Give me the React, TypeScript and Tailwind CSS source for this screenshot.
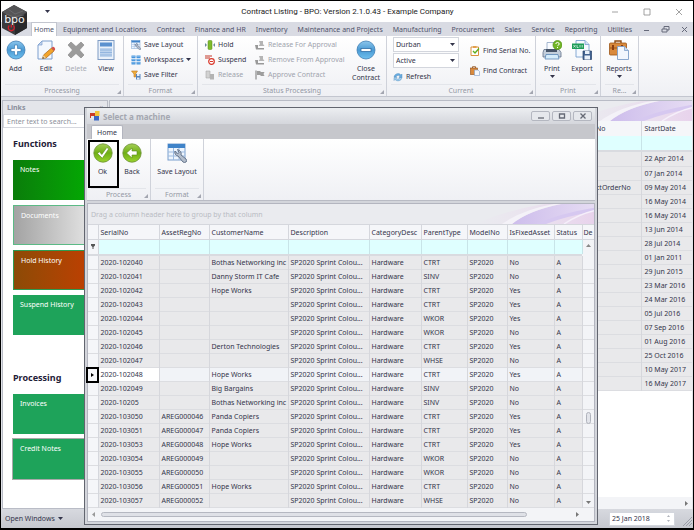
import React, { useState } from 'react';

type MachineRow = [string, string, string, string, string];

const MACHINES: MachineRow[] = [
  ['2020-102040', '', 'Bothas Networking inc', 'CTRT', 'No'],
  ['2020-102041', '', 'Danny Storm IT Cafe', 'SINV', 'No'],
  ['2020-102042', '', 'Hope Works', 'CTRT', 'Yes'],
  ['2020-102043', '', '', 'CTRT', 'Yes'],
  ['2020-102044', '', '', 'WKOR', 'Yes'],
  ['2020-102045', '', '', 'WKOR', 'No'],
  ['2020-102046', '', 'Derton Technologies', 'CTRT', 'Yes'],
  ['2020-102047', '', '', 'WHSE', 'No'],
  ['2020-102048', '', 'Hope Works', 'CTRT', 'Yes'],
  ['2020-102049', '', 'Big Bargains', 'SINV', 'No'],
  ['2020-10205', '', 'Bothas Networking inc', 'SINV', 'No'],
  ['2020-103050', 'AREG000046', 'Panda Copiers', 'CTRT', 'Yes'],
  ['2020-103051', 'AREG000047', 'Panda Copiers', 'CTRT', 'Yes'],
  ['2020-103053', 'AREG000048', 'Hope Works', 'CTRT', 'Yes'],
  ['2020-103054', 'AREG000049', '', 'WKOR', 'No'],
  ['2020-103055', 'AREG000050', '', 'WKOR', 'No'],
  ['2020-103056', 'AREG000051', 'Hope Works', 'CTRT', 'No'],
  ['2020-103057', 'AREG000052', '', 'WHSE', 'No'],
];

const START_DATES = [
  '22 Apr 2014', '07 Jan 2014', '09 May 2014', '16 May 2014', '16 May 2014', '13 Jun 2014',
  '28 Jul 2014', '01 Jan 2011', '29 Jun 2015', '23 Mar 2016', '24 Mar 2016', '05 Jul 2016',
  '07 Sep 2016', '01 Aug 2016', '25 Oct 2016', '10 May 2017', '16 May 2017',
];

const MENU = [
  'Equipment and Locations', 'Contract', 'Finance and HR', 'Inventory', 'Maintenance and Projects',
  'Manufacturing', 'Procurement', 'Sales', 'Service', 'Reporting', 'Utilities',
];

const COLUMNS = [
  'SerialNo', 'AssetRegNo', 'CustomerName', 'Description', 'CategoryDesc',
  'ParentType', 'ModelNo', 'IsFixedAsset', 'Status',
];

function Logo() {
  return (
    <svg viewBox="0 0 28 32" className="w-7 h-8">
      <path d="M13 0 26 7v16l-12 7L1 23V7z" fill="#3b3b3d" />
      <path d="M13 0 26 7l-12 7L1 7z" fill="#555557" />
      <path d="M14 15 26 8v15l-12 7z" fill="#29292b" />
      <path d="M7 4l7 5 8-3M5 9l8 3 10-2" stroke="#77777a" strokeWidth=".6" fill="none" />
      <text x="13.500" y="18" textAnchor="middle" fontSize="11" fontFamily="DejaVu Sans" fill="#f4f4f4">bpo</text>
      <path d="M8.300 20.500a3 3 0 1 0 4 0M10.300 19.500v3" fill="none" stroke="#d3202c" strokeWidth="1.300" />
    </svg>
  );
}

function AddIcon() {
  return (
    <svg viewBox="0 0 20 20" className="size-5">
      <defs>
        <linearGradient id="blueBall" x1="0" y1="0" x2="0" y2="1">
          <stop offset="0" stopColor="#8cc6ec" />
          <stop offset=".5" stopColor="#4a9ad4" />
          <stop offset="1" stopColor="#6fc0ee" />
        </linearGradient>
      </defs>
      <circle cx="10" cy="10" r="9" fill="url(#blueBall)" stroke="#3f7fb5" strokeWidth=".8" />
      <path d="M8.500 5h3v3.500H15v3h-3.500V15h-3v-3.500H5v-3h3.500z" fill="#fff" stroke="#3b7db3" strokeWidth=".7" />
    </svg>
  );
}

function CloseContractIcon() {
  return (
    <svg viewBox="0 0 20 20" className="size-5">
      <circle cx="10" cy="10" r="9" fill="url(#blueBall)" stroke="#3f7fb5" strokeWidth=".8" />
      <rect x="5" y="8.500" width="10" height="3" fill="#fff" stroke="#2f6da5" strokeWidth=".8" />
    </svg>
  );
}

function EditIcon() {
  return (
    <svg viewBox="0 0 20 20" className="size-5">
      <path d="M6 1h10v18H2V5z" fill="#f4f8fe" stroke="#7d9fce" />
      <path d="M6 1v4H2z" fill="#c3d5ee" stroke="#7d9fce" strokeWidth=".7" />
      <path d="M6.500 18.500l1-3.500 8-7 2.500 3-8 7z" fill="#f2a42c" stroke="#a4641a" strokeWidth=".7" />
      <path d="M15.500 8l1-1q1-.5 2 .5t.5 2.500l-1 1z" fill="#d5524a" />
      <path d="M6.500 18.500l1-3.500 2.500 3z" fill="#e9cfa0" />
      <path d="M6.500 18.500l.5-1.500 1.200 1.200z" fill="#333" />
    </svg>
  );
}

function DeleteIcon() {
  return (
    <svg viewBox="0 0 20 20" className="size-5">
      <path d="M5 2l5 4.500L15 2l3 3-4.500 5 4.500 5-3 3-5-4.500L5 18l-3-3 4.500-5L2 5z" fill="#9b9b9b" stroke="#858585" strokeWidth=".6" />
    </svg>
  );
}

function ViewIcon() {
  return (
    <svg viewBox="0 0 20 20" className="size-5">
      <rect x="2" y=".5" width="16" height="19" fill="#eaf1fa" stroke="#7f9cc4" />
      <rect x="4" y="2.500" width="12" height="4" fill="#5b91cf" />
      <rect x="4" y="8" width="12" height="9" fill="#bdd3ed" />
      <path d="M4 10h12M4 12.500h12M4 15h12" stroke="#89aeda" strokeWidth=".8" />
    </svg>
  );
}

function PrintIcon() {
  return (
    <svg viewBox="0 0 20 20" className="size-5">
      <path d="M5 2.500h9V10H5z" fill="#fafcff" stroke="#8fa6c4" strokeWidth=".8" />
      <path d="M2 9.500h15l2 3V17H1v-4.500z" fill="#c3cedb" stroke="#5f7088" strokeWidth=".8" />
      <path d="M4 9h11v3H4z" fill="#475569" />
      <path d="M4 14.500h12l1 4.500H3z" fill="#d5ecfb" stroke="#5b87b5" strokeWidth=".8" />
      <circle cx="15.500" cy="5" r="4.500" fill="#72b626" stroke="#4f8f14" strokeWidth=".7" />
      <path d="M13.800 4q0-1.500 1.700-1.500T17.200 4q0 1-1.700 1.700M15.500 7v1" fill="none" stroke="#fff" strokeWidth="1" />
    </svg>
  );
}

function ExportIcon() {
  return (
    <svg viewBox="0 0 20 20" className="size-5">
      <path d="M4 .5h9l4 4V17H4z" fill="#f5f9ff" stroke="#7ba0cf" strokeWidth=".9" />
      <path d="M13 .5v4h4" fill="#cfe0f3" stroke="#7ba0cf" strokeWidth=".8" />
      <rect x="0" y="3.500" width="12" height="5.500" fill="#1f9d5a" />
      <path d="M1.500 5l2 2.500m0-2.500l-2 2.500M5 5v2.500h1.500M8 5v2.500M10.200 5v2.500" stroke="#d8f2e4" strokeWidth=".8" fill="none" />
      <path d="M11 11h8.500v8.500H11z" fill="#41618f" stroke="#27426b" strokeWidth=".7" />
      <path d="M13 11h4.500v3H13zM12.500 15.500H18v4h-5.500z" fill="#e8f0fa" />
    </svg>
  );
}

function ReportsIcon() {
  return (
    <svg viewBox="0 0 20 20" className="size-5">
      <path d="M6 3V1h6v2" fill="none" stroke="#8c4a14" strokeWidth="1.400" />
      <rect x=".5" y="3" width="17" height="12" rx="1" fill="#d98a3d" stroke="#9c5618" strokeWidth=".8" />
      <path d="M1 8h16" stroke="#9c5618" />
      <path d="M3 5h2v5H3zM12 5h2v3h-2z" fill="#8b3f12" />
      <path d="M8.500 6.500h7l4 4v9h-11z" fill="#f2f7fe" stroke="#7f9fca" strokeWidth=".9" />
      <path d="M15.500 6.500v4h4" fill="#cadbf0" stroke="#7f9fca" strokeWidth=".8" />
    </svg>
  );
}

function OkIcon({ back = false }: { back?: boolean }) {
  return (
    <svg viewBox="0 0 20 20" className="size-5">
      <defs>
        <linearGradient id={back ? 'greenBack' : 'greenOk'} x1="0" y1="0" x2="0" y2="1">
          <stop offset="0" stopColor="#a5cf55" />
          <stop offset=".5" stopColor="#6fae16" />
          <stop offset="1" stopColor="#9bd42e" />
        </linearGradient>
      </defs>
      <circle cx="10" cy="10" r="9.200" fill={back ? 'url(#greenBack)' : 'url(#greenOk)'} stroke="#6b8f35" strokeWidth=".8" />
      {back ? (
        <path d="M4.500 10l5.500-5v3h5v4h-5v3z" fill="#fff" stroke="#5b8a1d" strokeWidth=".6" />
      ) : (
        <path d="M4.500 10.500l2-1.700 2.300 2.700 5-7 2 1.300-6.500 9.500z" fill="#fff" stroke="#5b8a1d" strokeWidth=".6" />
      )}
    </svg>
  );
}

function LayoutIcon({ className }: { className: string }) {
  return (
    <svg viewBox="0 0 20 20" className={className}>
      <rect x="1" y="1" width="17" height="16" fill="#eef5fd" stroke="#7a9fce" />
      <rect x="1" y="1" width="17" height="4" fill="#3f83c9" />
      <path d="M1 9h17M1 13h17M6.500 5v12M12 5v12" stroke="#9dbbe0" />
      <path d="M8 8q-1 4 3 5l5 6q1.500 1 3 0t0-3L14 12q1-4-3.500-5.500l1.500 3L10.500 11z" fill="#b3bdcb" stroke="#66758c" strokeWidth="1" />
    </svg>
  );
}

// 10px glyphs for the small ribbon buttons
function SmallIcon({ kind }: { kind: string }) {
  if (kind === 'layout') return <LayoutIcon className="size-2.5 shrink-0" />;
  return (
    <svg viewBox="0 0 10 10" className="size-2.5 shrink-0">
      {kind === 'workspaces' && (
        <>
          <path d="M.5 .5h4v2.500h-4zM5.500 .5h4v2.500h-4zM.5 3.800h4v2.500h-4zM5.500 3.800h4v2.500h-4zM.5 7h4v2.500h-4zM5.500 7h4v2.500h-4z" fill="#4795dc" />
          <path d="M1 1.300h3M6 1.300h3M1 4.600h3M6 4.600h3M1 7.800h3M6 7.800h3" stroke="#a6d0f5" strokeWidth=".6" />
        </>
      )}
      {kind === 'filter' && (
        <>
          <path d="M.5 1h6l-2 3v3H3V4z" fill="#f0ae3a" stroke="#bd7620" strokeWidth=".6" />
          <path d="M5 4h4.500v5.500H5z" fill="#5684bd" />
          <path d="M6 4h2.500v2H6zM6 7.500h2.500v2H6z" fill="#e4edf8" />
        </>
      )}
      {kind === 'hold' && (
        <>
          <rect x="3" y=".5" width="4" height="9" rx="1" fill="#7dbb2b" stroke="#558a18" strokeWidth=".5" />
          <path d="M0 3l2 2-2 2zM10 3L8 5l2 2z" fill="#6d8a9c" />
        </>
      )}
      {kind === 'suspend' && (
        <>
          <path d="M0 1h7M0 3h5" stroke="#c3392b" strokeWidth="1.200" />
          <circle cx="6.500" cy="6.500" r="2.800" fill="#fff" stroke="#d8372a" strokeWidth="1.200" />
          <path d="M5 6.500h3" stroke="#d8372a" />
        </>
      )}
      {kind === 'release' && (
        <>
          <path d="M1 1h4v7H1z" fill="#d2d2d2" stroke="#aaa" strokeWidth=".6" />
          <path d="M5 4h4v5.500H5z" fill="#b3b3b3" />
        </>
      )}
      {kind === 'stamp' && (
        <>
          <path d="M4 1h4v3l1.500 2h-6L5 4z" fill="#b5b5b5" />
          <path d="M0 5h3v3h6v1.500H1z" fill="#999" />
        </>
      )}
      {kind === 'flag' && (
        <>
          <path d="M1 .5v9" stroke="#777" />
          <path d="M2 1h3l1 1h3.500L8.500 4l1 2H6L5 5H2z" fill="#9d9d9d" />
        </>
      )}
      {kind === 'refresh' && (
        <>
          <path d="M1 5a4 4 0 0 1 7-2l1-1v3.500H6L7 4a2.500 2.500 0 0 0-4 1z" fill="#6aaee2" stroke="#3c80b8" strokeWidth=".4" />
          <path d="M9 5.500a4 4 0 0 1-7 2l-1 1V5.500h3l-1 1a2.500 2.500 0 0 0 4-1z" fill="#a3d0f0" stroke="#3c80b8" strokeWidth=".4" />
        </>
      )}
      {kind === 'serial' && (
        <>
          <path d="M1 1h7.500v8.500H1z" fill="#fff" stroke="#d9903c" />
          <path d="M3 0h3.500v2H3z" fill="#e2a04c" />
          <path d="M3 5l2 2 4-4.500" stroke="#5fae20" strokeWidth="1.400" fill="none" />
        </>
      )}
      {kind === 'contract' && (
        <>
          <rect x=".5" y="2" width="7" height="6.500" fill="#d98a3d" stroke="#8f4c15" strokeWidth=".6" />
          <path d="M2.500 2V.7h3V2" stroke="#8f4c15" strokeWidth=".8" fill="none" />
          <path d="M4.500 4H8l1.500 1.500v4h-5z" fill="#f4f8fe" stroke="#7f9fca" strokeWidth=".6" />
        </>
      )}
    </svg>
  );
}

function Caret({ className = '' }: { className?: string }) {
  return (
    <svg viewBox="0 0 5 3" className={`w-[5px] h-[3px] shrink-0 ${className}`}>
      <path d="M0 0h5L2.500 3z" fill="currentColor" />
    </svg>
  );
}

function Group({ title, width, children }: { title: string; width: string; children: React.ReactNode }) {
  return (
    <section className={`${width} shrink-0 flex flex-col border-r border-[#cfd2da] pt-px`}>
      <div className="flex-1 flex">{children}</div>
      <div className="relative h-3 mx-1 border-t border-[#e3e5ea] text-center leading-[11px] text-[#9498a4]">
        {title}
        <svg viewBox="0 0 4 4" className="absolute -right-0.5 bottom-0.5 size-1">
          <path d="M4 0v4H0z" fill="#a3a6b0" />
        </svg>
      </div>
    </section>
  );
}

function BigButton({ icon, label, width, disabled, menu }: {
  icon: React.ReactNode; label: string; width: string; disabled?: boolean; menu?: boolean;
}) {
  return (
    <button disabled={disabled} className={`${width} flex flex-col items-center pt-[3px] leading-[9px] ${disabled ? 'text-[#a8abb4]' : ''}`}>
      {icon}
      <span className="pt-1">{label}</span>
      {menu && <Caret className="mt-0.5" />}
    </button>
  );
}

function SmallButton({ icon, label, disabled, menu }: { icon: string; label: string; disabled?: boolean; menu?: boolean }) {
  return (
    <button disabled={disabled} className={`flex items-center gap-[3px] h-[15px] whitespace-nowrap ${disabled ? 'text-[#a0a3ad]' : ''}`}>
      <SmallIcon kind={icon} />
      {label}
      {menu && <Caret />}
    </button>
  );
}

function Combo({ label, value }: { label: string; value: string }) {
  return (
    <div className="relative">
      <select aria-label={label} className="block w-[66px] h-[15px] appearance-none border border-[#d3d6dd] bg-white pl-[2px]">
        <option>{value}</option>
      </select>
      <Caret className="absolute right-1 top-1.5 pointer-events-none" />
    </div>
  );
}

function Swirl() {
  return (
    <svg viewBox="0 0 130 21" preserveAspectRatio="none" className="w-[130px] h-full">
      <defs>
        <linearGradient id="swirlPink" x1="0" x2="1">
          <stop offset="0" stopColor="#ecdff0" stopOpacity="0" />
          <stop offset="1" stopColor="#e8d3ec" />
        </linearGradient>
        <linearGradient id="swirlViolet" x1="0" x2="1">
          <stop offset="0" stopColor="#cdbdec" />
          <stop offset="1" stopColor="#e6dcf3" />
        </linearGradient>
      </defs>
      <path d="M10 21Q45 6 80 0h50v21z" fill="url(#swirlPink)" />
      <path d="M48 21Q66 6 98 0h32v8q-30 4-50 13z" fill="url(#swirlViolet)" />
      <path d="M38 21Q58 6 90 0h7Q64 7 48 21z" fill="#f4f2f8" />
      <path d="M72 21Q96 10 130 4v4q-28 5-48 13z" fill="#d6c8f0" />
      <path d="M100 21q14-10 30-14" stroke="#f5effa" strokeWidth="1.500" fill="none" />
    </svg>
  );
}

function MainRibbon() {
  return (
    <div className="flex h-[61px] border-b border-[#c3c6cf] bg-gradient-to-b from-white to-[#eff0f4]">
      <Group title="Processing" width="w-[123px]">
        <BigButton icon={<AddIcon />} label="Add" width="w-[29px]" />
        <BigButton icon={<EditIcon />} label="Edit" width="w-8" />
        <BigButton icon={<DeleteIcon />} label="Delete" width="w-7" disabled />
        <BigButton icon={<ViewIcon />} label="View" width="w-8" />
      </Group>
      <Group title="Format" width="w-[74px]">
        <div className="flex flex-col pl-[7px]">
          <SmallButton icon="layout" label="Save Layout" />
          <SmallButton icon="workspaces" label="Workspaces" menu />
          <SmallButton icon="filter" label="Save Filter" />
        </div>
      </Group>
      <Group title="Status Processing" width="w-[189px]">
        <div className="flex flex-col w-[49px] pl-[7px]">
          <SmallButton icon="hold" label="Hold" />
          <SmallButton icon="suspend" label="Suspend" />
          <SmallButton icon="release" label="Release" disabled />
        </div>
        <div className="flex flex-col w-[101px] pl-2">
          <SmallButton icon="stamp" label="Release For Approval" disabled />
          <SmallButton icon="stamp" label="Remove From Approval" disabled />
          <SmallButton icon="flag" label="Approve Contract" disabled />
        </div>
        <BigButton icon={<CloseContractIcon />} label="Close Contract" width="w-9" />
      </Group>
      <Group title="Current" width="w-[149px]">
        <div className="flex flex-col pl-[6px] gap-px">
          <Combo label="Site" value="Durban" />
          <Combo label="Status" value="Active" />
          <SmallButton icon="refresh" label="Refresh" />
        </div>
        <div className="flex flex-col pl-[11px] pt-1.5 gap-[5px]">
          <SmallButton icon="serial" label="Find Serial No." />
          <SmallButton icon="contract" label="Find Contract" />
        </div>
      </Group>
      <Group title="Print" width="w-[65px]">
        <BigButton icon={<PrintIcon />} label="Print" width="w-8" menu />
        <BigButton icon={<ExportIcon />} label="Export" width="w-7" />
      </Group>
      <Group title="Re..." width="w-[38px]">
        <BigButton icon={<ReportsIcon />} label="Reports" width="w-9" menu />
      </Group>
    </div>
  );
}

function Tile({ label, className }: { label: string; className: string }) {
  return (
    <button className={`block w-full h-10 pl-[7px] pt-[5px] text-left align-top text-white leading-[10px] ${className}`}>
      <span className="block h-full">{label}</span>
    </button>
  );
}

function LinksPanel() {
  return (
    <aside className="w-[106px] shrink-0 flex flex-col border border-[#b9bcc6] bg-white">
      <div className="flex h-[13px] items-center justify-between px-1 bg-[#e4e5ea] font-bold text-[#8b8f9c]">
        Links
        <span className="text-[#555]">«</span>
      </div>
      <input aria-label="Search links" placeholder="Enter text to search..." className="h-3.5 px-[3px] border border-[#d5d7de] placeholder:text-[#8d919b]" />
      <div className="pl-2.5">
        <h2 className="py-[11px] text-[9px] leading-[10px] font-bold text-[#1f2037]">Functions</h2>
        <div className="flex flex-col gap-[5px]">
          <Tile label="Notes" className="bg-gradient-to-r from-[#0a7d0a] to-[#00b400]" />
          <Tile label="Documents" className="border border-[#5cba86] bg-gradient-to-r from-[#a3a3a3] to-[#f2f2f2]" />
          <Tile label="Hold History" className="border border-[#2f9a50] bg-gradient-to-r from-[#8c4a06] to-[#c93a00]" />
          <Tile label="Suspend History" className="bg-[#1ea35a]" />
        </div>
        <h2 className="pt-[38px] pb-[11px] text-[9px] leading-[10px] font-bold text-[#1f2037]">Processing</h2>
        <div className="flex flex-col gap-[5px]">
          <Tile label="Invoices" className="bg-[#1ea35a]" />
          <Tile label="Credit Notes" className="bg-[#1ea35a] outline outline-[#a9a9a9]" />
        </div>
      </div>
    </aside>
  );
}

function ContractsPanel() {
  return (
    <main className="flex-1 flex flex-col border-l border-t border-[#b9bcc6] bg-white">
      <div className="flex h-5 justify-end bg-[#eaebef]"><Swirl /></div>
      <table className="w-full table-fixed border-collapse">
        <colgroup>
          <col />
          <col className="w-[46px]" />
          <col className="w-[51px]" />
        </colgroup>
        <thead className="bg-[#f5f6f9]">
          <tr className="h-[15px]">
            <th />
            <th className="pl-px text-left font-normal border-r border-[#d5d7dd]">No</th>
            <th className="pl-[3px] text-left font-normal">StartDate</th>
          </tr>
          <tr className="h-[14px] bg-[#dfffff]">
            <td />
            <td className="border-r border-[#c8e4e8]" />
            <td />
          </tr>
          <tr className="h-[2px] bg-[#d9dbe0]"><td colSpan={3} /></tr>
        </thead>
        <tbody>
          {START_DATES.map((date, i) => (
            <tr key={i} className="h-3.5 bg-[#e9e9eb] border-b border-[#dcdde1]">
              <td />
              <td className="pl-px border-r border-[#d6d7dc]">{i === 2 ? 'ctOrderNo' : ''}</td>
              <td className="pl-[3px] whitespace-nowrap">{date}</td>
            </tr>
          ))}
        </tbody>
      </table>
      <div className="mt-auto flex h-3 items-center justify-end pr-1 bg-[#f3f4f7]">
        <svg viewBox="0 0 3 5" className="w-[3px] h-[5px]"><path d="M0 0l3 2.500L0 5z" fill="#777" /></svg>
      </div>
    </main>
  );
}

function MachineGrid() {
  const [selected, setSelected] = useState(8);

  return (
    <div className="flex-1 flex flex-col border border-[#b3b5bf] bg-[#f3f4f7]">
      <div className="flex h-5 items-center justify-between pl-[3px] bg-[#eaebef] text-[#b9bbc3]">
        Drag a column header here to group by that column
        <Swirl />
      </div>
      <div className="relative">
        <table className="w-full table-fixed border-collapse">
          <colgroup>
            <col className="w-2.5" />
            <col className="w-[61px]" />
            <col className="w-[50px]" />
            <col className="w-[79px]" />
            <col />
            <col className="w-[52px]" />
            <col className="w-[46px]" />
            <col className="w-10" />
            <col className="w-[47px]" />
            <col className="w-7" />
            <col className="w-3" />
          </colgroup>
          <thead>
            <tr className="h-[15px] bg-[#f5f6f9] border-t border-b border-[#d5d7dd]">
              <th className="border-r border-[#d5d7dd]" />
              {COLUMNS.map(c => (
                <th key={c} className="pl-[2px] text-left font-normal whitespace-nowrap border-r border-[#d5d7dd]">{c}</th>
              ))}
              <th className="pl-px text-left font-normal overflow-hidden">De</th>
            </tr>
            <tr className="h-[14px] bg-[#dfffff]">
              <td className="bg-[#f5f6f9] border-r border-[#d5d7dd]">
                <svg viewBox="0 0 4 5" className="mx-auto w-1 h-[5px]"><path d="M0 0h4v1.500L2.500 3v2h-1V3L0 1.500z" fill="#555" /></svg>
              </td>
              {COLUMNS.map(c => <td key={c} className="border-r border-[#c8e4e8]" />)}
              <td className="bg-[#f3f4f7]" />
            </tr>
            <tr className="h-[2px] bg-[#d9dbe0]">
              <td colSpan={10} />
              <td className="bg-[#f3f4f7]" />
            </tr>
          </thead>
          <tbody>
            {MACHINES.map(([serial, reg, customer, parent, fixed], i) => {
              const active = i === selected;
              const cells = [serial, reg, customer, 'SP2020 Sprint Colou...', 'Hardware', parent, 'SP2020', fixed, 'A'];
              return (
                <tr
                  key={serial}
                  onClick={() => setSelected(i)}
                  className={`h-3.5 border-b border-[#dcdde1] ${active ? 'bg-[#f1f3f7]' : 'bg-[#e9e9eb]'}`}
                >
                  <td className="bg-[#f5f6f9] border-r border-[#d5d7dd]">
                    {active && (
                      <div className="relative">
                        <div className="absolute -left-0.5 -top-2 flex w-[13px] h-4 items-center justify-center border-2 border-black">
                          <svg viewBox="0 0 3 4" className="w-[3px] h-1"><path d="M0 0l3 2-3 2z" /></svg>
                        </div>
                      </div>
                    )}
                  </td>
                  {cells.map((cell, c) => (
                    <td
                      key={c}
                      className={`pl-[2px] whitespace-nowrap border-r border-[#d6d7dc] ${active && c === 0 ? 'bg-white' : ''}`}
                    >
                      {cell}
                    </td>
                  ))}
                  <td className="bg-[#f3f4f7]" />
                </tr>
              );
            })}
          </tbody>
        </table>
        {/* Vertical scroll bar */}
        <div className="absolute right-0 top-4 bottom-0 w-3 flex flex-col items-center justify-between py-1">
          <svg viewBox="0 0 5 3" className="w-[5px] h-[3px]"><path d="M0 3h5L2.500 0z" fill="#888" /></svg>
          <div className="mt-[88px] w-[5px] h-3 rounded-sm border border-[#b0b3bc] bg-[#e2e4ea]" />
          <Caret className="text-[#777]" />
        </div>
      </div>
      <div className="flex flex-1 items-center pl-1 pr-[15px] text-[#777]">
        <svg viewBox="0 0 3 5" className="w-[3px] h-[5px]"><path d="M3 0v5L0 2.500z" fill="#999" /></svg>
        <div className="ml-1.5 w-[426px] h-[5px] rounded-full border border-[#b5b8c1] bg-[#dfe1e7]" />
        <svg viewBox="0 0 3 5" className="ml-auto w-[3px] h-[5px]"><path d="M0 0l3 2.500L0 5z" fill="#777" /></svg>
      </div>
    </div>
  );
}

function WindowButton({ label, d }: { label: string; d: string }) {
  return (
    <button aria-label={label} className="flex w-[19px] h-2.5 items-center justify-center rounded-xs border border-[#b4b7c0] bg-[#e6e8ec]">
      <svg viewBox="0 0 8 6" className="w-2 h-1.5"><path d={d} stroke="#666a75" strokeWidth="1.300" fill="none" /></svg>
    </button>
  );
}

function MachineDialog() {
  return (
    <div role="dialog" aria-label="Select a machine" className="absolute left-[83px] top-[106px] w-[514px] h-[418px] flex flex-col border border-[#62656f] bg-[#d3d5db] px-[2px] pb-[2px]">
      <div className="flex h-4 shrink-0 items-center px-[3px] bg-gradient-to-b from-[#eceef1] to-[#d4d6dc]">
        <svg viewBox="0 0 10 10" className="size-2.5">
          <rect x="0" y="2" width="5" height="5" fill="#c93b28" />
          <rect x="5" y="0" width="4.500" height="5" fill="#f2c43a" />
          <rect x="4" y="5" width="5" height="4.500" fill="#3b66c4" />
          <rect x="1" y="5" width="3" height="3" fill="#e8e8e8" />
        </svg>
        <h1 className="pl-[3px] font-bold text-[8px] text-[#a4a7b0]">Select a machine</h1>
        <div className="ml-auto flex gap-[2px]">
          <WindowButton label="Minimize" d="M1 5h6" />
          <WindowButton label="Maximize" d="M1.500 1h5v4h-5z" />
          <WindowButton label="Close" d="M1.500 .5l5 5M6.500 .5l-5 5" />
        </div>
      </div>
      <div role="tablist" className="flex h-[15px] shrink-0 items-end pl-1 bg-[#c6c7cc]">
        <button role="tab" aria-selected="true" className="h-3.5 w-8 rounded-t-xs border border-b-0 border-[#b3b5bf] bg-white">Home</button>
      </div>
      <div className="relative flex h-[62px] shrink-0 border-b border-[#b9bbc4] bg-gradient-to-b from-white to-[#eff0f4]">
        <Group title="Process" width="w-16">
          <BigButton icon={<OkIcon />} label="Ok" width="w-[31px]" />
          <BigButton icon={<OkIcon back />} label="Back" width="w-7" />
        </Group>
        <Group title="Format" width="w-[53px]">
          <BigButton icon={<LayoutIcon className="size-5" />} label="Save Layout" width="w-[52px]" />
        </Group>
        <div className="absolute left-px top-px w-[31px] h-12 border-2 border-black pointer-events-none" />
      </div>
      <div className="h-[2px] shrink-0" />
      <MachineGrid />
    </div>
  );
}

export default function App() {
  return (
    <div className="relative flex flex-col min-h-screen border border-black border-b-2 bg-[#e1e3e8] font-['Noto_Sans','DejaVu_Sans',sans-serif] text-[7px] leading-[9px] text-[#33344a]">
      <header className="relative bg-white">
        <div className="flex h-[21px] items-center pr-12">
          <Caret className="ml-11" />
          <div className="flex-1 text-center text-[8px] text-[#222] font-['Roboto',sans-serif]">
            Contract Listing - BPO: Version 2.1.0.43 - Example Company
          </div>
          <div className="absolute right-2.5 flex items-center gap-6 text-[#8a8a8a]">
            <button aria-label="Minimize window"><svg viewBox="0 0 8 8" className="size-2"><path d="M1 4h6" stroke="currentColor" strokeWidth=".8" /></svg></button>
            <button aria-label="Maximize window"><svg viewBox="0 0 8 8" className="size-2"><path d="M1 1h6v6H1z" stroke="currentColor" strokeWidth=".8" fill="none" /></svg></button>
            <button aria-label="Close window"><svg viewBox="0 0 8 8" className="size-2"><path d="M1 1l6 6M7 1L1 7" stroke="currentColor" strokeWidth=".8" /></svg></button>
          </div>
        </div>
        <nav className="flex h-3.5 items-center gap-2.5 pl-[30px] bg-[#d9dbe3] text-[#50536b] whitespace-nowrap">
          <a href="#home" className="flex h-full w-[26px] shrink-0 -mr-1 items-center justify-center bg-white border-x border-t border-[#c3c6cf]">Home</a>
          {MENU.map(item => <a key={item} href={`#${item}`}>{item}</a>)}
          <svg viewBox="0 0 48 8" className="ml-auto mr-1 w-12 h-2 shrink-0" fill="none" stroke="#666a7a">
            <path d="M2 5.500h5M20 4h5v3h-5zM22 4V1.500h5V5h-2M40 2l5 5M45 2l-5 5" />
          </svg>
        </nav>
        <div className="absolute left-0 top-1"><Logo /></div>
      </header>
      <MainRibbon />
      <div className="flex flex-1 gap-px pt-[3px] px-px">
        <LinksPanel />
        <ContractsPanel />
      </div>
      <footer className="flex h-[19px] items-center justify-between pl-1 pr-px bg-gradient-to-b from-[#d7d9df] to-[#c6c8cf]">
        <button className="flex items-center gap-[3px]">Open Windows <Caret /></button>
        <div className="flex items-end gap-2">
          <div className="flex w-[66px] h-3.5 items-center pr-[3px] bg-white border border-[#d3d6dd]">
            <input aria-label="Work date" defaultValue="25 Jan 2018" className="min-w-0 flex-1 pl-[2px]" />
            <svg viewBox="0 0 5 9" className="w-[5px] h-[9px]"><path d="M1 3l1.500-2L4 3zM1 6l1.500 2L4 6z" fill="#b0b3bb" /></svg>
          </div>
          <svg viewBox="0 0 9 9" className="size-[9px]"><path d="M9 0L0 9M9 3L3 9M9 6L6 9" stroke="#9c9fa9" /></svg>
        </div>
      </footer>
      <MachineDialog />
    </div>
  );
}
